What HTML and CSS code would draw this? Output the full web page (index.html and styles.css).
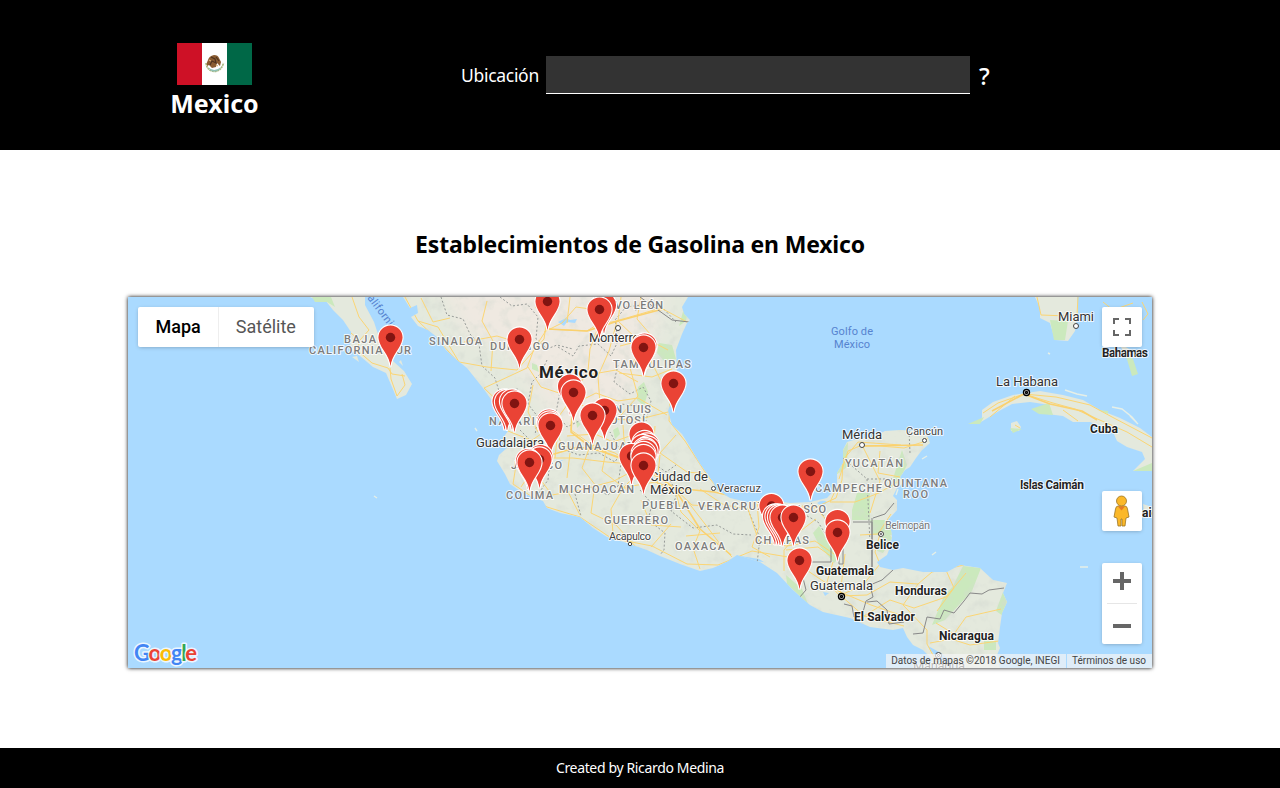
FILE: index.html
```html
<!DOCTYPE html>
<html lang="es">
<head>
<meta charset="utf-8">
<title>Establecimientos de Gasolina en Mexico</title>
<link rel="stylesheet" href="styles.css">
</head>
<body>
<header class="header">
  <div class="brand">
    <svg class="flag" viewBox="0 0 75 42">
      <path fill="#ce1126" d="M0 0h25v42H0z"/><path fill="#fff" d="M25 0h25v42H25z"/><path fill="#006847" d="M50 0h25v42H50z"/>
      <path d="M29 20q1 8 8.500 8.500q7-.5 9-8.500" fill="none" stroke="#a9b77f" stroke-width="1.600" stroke-dasharray="2 .6"/>
      <path d="M31 24q6 6 13 0l-2 3q-5 3-9 0z" fill="#8fc1b5"/>
      <path d="M31 17q1-4 6-5q4 0 5 3l2 4-1 4-3-3-1 4-4 1-3-3-2 1q-1-3 1-6z" fill="#8a5c31"/>
      <path d="M34 14l4 2 1 4-4-2-2 4m6-8l3 4" fill="none" stroke="#4f3420" stroke-width="1.200"/>
      <path d="M32 17l2 1m5 4l2 1" stroke="#d5b47b" stroke-width="1.200"/>
    </svg>
    <h1 class="brand-name">Mexico</h1>
  </div>
  <form class="search">
    <label class="search-label" for="place">Ubicación</label>
    <input class="search-input" id="place" type="text">
    <span class="search-help">?</span>
  </form>
</header>
<main class="main">
  <h2 class="title">Establecimientos de Gasolina en Mexico</h2>
  <section class="map">
    <svg class="map-canvas" viewBox="128 297 1024 371">
      <defs>
        <g id="pin"><path d="M-.7 28.500C-1.500 16-12.600 11-12.600 0A12.600 12.600 0 0 1 12.600 0C12.600 11 1.500 16 .7 28.500z" fill="#ea4335" stroke="#fff" stroke-width="1.100"/></g>
        <g id="pinDot"><use href="#pin"/><circle r="4.700" fill="#811411"/></g>
        <clipPath id="landClip"><use href="#mainland"/></clipPath>
        <filter id="soft" x="-30%" y="-30%" width="160%" height="160%"><feGaussianBlur stdDeviation="9"/></filter>
        <filter id="relief" x="0" y="0" width="100%" height="100%"><feTurbulence type="fractalNoise" baseFrequency=".09" numOctaves="4" seed="8"/><feColorMatrix values="0 0 0 0 .66  0 0 0 0 .7  0 0 0 0 .64  1.400 0 0 0 -.68"/></filter>
        <path id="mainland" d="M403 297L410 308 417 305 418 313 411 317 418 326 428 330 438 338 446 350 457 360 467 368 475 378 483 388 493 402 502 420 508 431 503 438 508 447 499 455 497 461 505 474 510 484 520 491 532 497 543 501 547 508 560 513 580 517 593 528 607 537 627 543 647 550 660 556 680 564 700 571 713 568 720 565 728 561 737 555 750 559 760 562 777 573 793 590 810 605 823 612 850 618 870 627 893 630 903 628 907 637 913 645 923 650 930 657 937 668H1000L997 655 1000 648 998 643 1000 627 1002 613 1007 602 1003 593 1007 583 993 580 980 568 960 565 947 572 923 572 903 568 893 570 880 567 877 562 887 555 890 547 892 537 890 523 888 520 897 510 897 500 893 496 897 488 903 483 900 477 905 470 910 467 916 458 922 450 930 443 927 435 918 431 900 430 885 431 873 437 857 439 847 442 843 450 843 463 837 473 837 487 827 498 810 502 790 503 767 500 747 502 730 498 717 490 713 482 700 464 690 447 682 434 672 425 668 411 673 395 674 382 677 370 676 350 682 334 687 323 690 320 684 314 682 307 688 297z"/>
      </defs>
      <path class="sea" d="M128 297h1024v371H128z"/>
      <use href="#mainland" class="land"/>
      <g clip-path="url(#landClip)">
        <path filter="url(#soft)" fill="#efe9e1" d="M440 285H665L655 330 635 390 615 415 590 440 565 430 530 385 505 345 465 335z"/>
        <g class="park">
          <path d="M659 343l13 2 4 14-12 2-7-8zM638 387l6-5 4 10-4 14-7-6zM532 363l5 2 2 7-7-3zM684 308l5-1-3 14-7 5zM843 450l5-8-1 25-11 8zM857 493h13v27h-18v-10zM870 520h28v15h-25zM819 526l12 20 7 13-4 4-15-18-6-12zM902 450l5 15-9 18-8 5zM887 530l5 8-9 15-6-2 4-12zM786 575l16 14 6 15-21-20zM963 566l18 2-9 23-27 29-13 5 12-29 9-10zM1003 592l4 10-4 14-7-5zM984 640l12 1v9h-12z"/>
          <path d="M613 430l5-3 2 7-5 5zM576 420l5 4-4 4z"/>
        </g>
        <path filter="url(#relief)" d="M400 297h610v371H400z"/>
        <g class="water"><path d="M558 322l8-4 4 2 7-1-2 4-8-1-3 4zM556 461l7-1-4 4zM817 503q6-4 10-1l-4 5zM823 592l6 1-4 3zM928 646l13 7 18 15h-10l-12-9zM626 447l4 3-4 1zM741 556l18 3 5 3-20-2z"/></g>
        <g class="state">
          <path d="M441 297l6 18 16 4 7 15 9 10 3 22 13 12 4 13 20-2M500 297l12 9 15-2 11 13-2 22 11 10 10-4 16 4M547 360l-6 13-9 9-4 22 10 13-3 18M558 347l15 9 6-10 19-2 13 12 7-15-3-21 11-13 16-2M635 310l24-6 17 18M618 365l-4 17 16 12 13-7 8 14-5 20M561 386l-5 27 11 14 16-8 12 7 17-4 9-18 17 2M520 430l12 12 2 15-14 12-9-3M560 448l19 7 20-2 16 9 6-10-11-20M550 458l-2 22-12 17M575 494l6 22M590 487l18 8 10-9 3-23 19 0M659 447l-10 13 17 12 10-7M640 490l12 14-4 16 17 13-1 17-4 5M668 477l9 16-6 18 22 17 24-3 16 9 18 1M748 510l12 28-3 26M800 512l18 10 10 16M811 503l12 12 9 15M843 458l24 21 3 64M867 479l25 0M909 431l1 22"/>
        </g>
        <g class="roads">
          <path d="M405 297l13 24 22 21 18 20 24 29 21 20 5 20 20 8 16 5M418 321l20 6 21 35 28 5 30 3 27-31 3-20-12-12M547 329l40 2 11-7 20-3 3-24M547 329l-13 20-7 19-43 20 23 22M544 332l18-9 14-16 28 4M598 328l18-7 45-13 26 14M599 325l-9 24-2 22-15 24-2 35 21 15 23 8 21 14M617 320l26 25 27 54-1 22 16 20 22 34 12 15 30 10 35 6 30 2 22-10 6-18 1-20 15-18 43 3M617 321l-8 30-11 25 3 43-9 29M643 345l-13 23 8 28-25 28M528 367l13 20 30 10 30 22 35 1 36-9M573 397l-22 30-26 18 20 13 28 0 34 4 37 3M531 445l-14 14-4 25 34 23 33 10 31 21 41 8 35 18 31 1 34-14 36 6 23 16 27 18 33 14 35 12M545 454l-5 25 12 16 28-5 34-9 28-15M553 421l9 25 38 5 42 16 18-14 27 19 20 2"/>
          <path d="M644 467l-21 21-12 21 2 24 17 11M646 470l28 18 18 17 27 2M675 489l6 23 19 19-7 17 7 21M688 502l17 22 15 20 12 13M700 489l24 16 24 4 11 33 28 4 28-5 22 15M757 502l2 25-7 20 18 10M803 505l-2 25-17 20 0 21M812 504l28 31M837 487l-7 15 25 0 24-9 21-13M862 446l18 0 24 2 19-6 6-5M862 445l-14 6-9 28M862 445l18 36-10 32M880 451l-2 22 22 4M880 534l-5 18 5 12-17 21-22 10M891 514l-13 20-18 1M845 554l-5 41 24 21 40 10M833 562l-6 20 13 14 27-1 23-13 28 2 14-12 32-7M864 616l26-16 24 8 32-11 20-24M918 584l-15 21 24 25 0 14 13 24M936 623l18 11 12-17 35-8M930 643l21-4 19 6 29-4M945 568l9 20-17 23"/>
          <path d="M421 298l12 24 17-4M487 301l-5 20 11 20-2 30M464 342l33-6 26 8M570 297l-3 26M641 297l-4 22 20 23M620 346l27-7 21 11M619 373l33 4 20-8M533 385l-5 27 10 20M587 375l29-5 22 12M574 404l22-11 22 8 20-3 29 17M529 448l4 21-12 18M558 430l-3 28M567 436l28-2 18 8 25-9M570 453l-3 25M590 446l-8 22 14 18M606 451l-4 20 25 19M623 425l2 29M633 430l10 32 17-9 16-18M655 426l-2 28M660 455l-3 28 20 12M621 488l34-6 30 10M566 488l14 27M594 491l-3 22 25 12 20 22M641 500l10 25 30 2M671 524l-20 23M720 533l-34 3M775 527l18 10 23-18M786 550l32-3 14 10"/>
        </g>
        <g class="main-roads"><path d="M547 329l40 2 31-10 45-12M573 397l-2 35 21 16 50 17M644 465l30 23 40 4 36 8M544 457l34-10 28 4M675 489l25 40 31 26M862 446l61-1"/></g>
        <path class="border" d="M640 297l18 13 14 10 17 2M799 598l7-8-3-12 4-16h24v-15l12-5v22h-4v-14M853 522h19v45M873 518l12-4 9-11M893 570l-11 10-12 5 3 12-7 4-3 11-9 5-2-11-8-2M872 567v-49M867 602l10-1 10 9 2 14 15-2M913 634l10-1 4-16 13 2 4-9 10 3 10-12 6-8 12 1 7-4 15-2"/>
      </g>
      <g class="land">
        <path d="M310 297l10 4 5-1 8 10 10 10 8 12-1 17 10 7 13 11 13 6 6 14 5 12 9-4 6-11-8-13-10-9-8-9-7-16-5-15-9-17V297zM352 357l7 5-2-6zM399 362l4 4-2-6z"/>
        <path d="M1035 297l5 11v10l10 5 5 17 13 1 7-10 3-20-1-14zM982 417l0-7 11-8 20-7 27-4 23 4 20 5 17 10 20 8 20 10 12 9v33l-19 1 12-12-3-7-15-5-10-6-4-9-23-10-17 0-10-6-16-2-14-5 17-4-20-3-18 2-13 7-18 11zM1011 423l6-2 4 6-2 4h-8zM1143 504l9 3v7l-8-1zM1119 343l10 6 4 12-8-6z"/>
      </g>
      <g class="park"><path d="M312 297h19l4 10-8-5-12 0zM1050 320l18 1-3 19-11 0zM1031 409l18-6 4 12-14-1zM968 424l16-7-4 7zM1010 428l12 1-9 4zM1133 471l19-8v8zM1126 356l7 3 5 15-6 2zM1098 410l10 1 0 3z"/></g>
      <g class="roads"><path d="M352 297l7 20 10 13-9 10-3 10 15 13 16 5 4 6 13 2M390 368l1 11 6 17 8-11-3-11M359 340l-8-7M1037 297l4 18 26 1M1078 297l-1 18M983 413l15-10 26-9 29 9 22 6 27 12 25 11 25 15M1024 394l32 3 34 8 22 12 40 21M1015 396l-25 21M1063 410l15 11M1103 302l10 8 20-7M1015 425l5 3M1142 302l6 12-5 6"/></g>
      <g class="main-roads"><path d="M992 411l32-17 26 10 32 7 15 9"/></g>
      <g class="islets"><path d="M374 496l3 2M475 428l2 3M922 459l5-3M898 489l-2 6M1065 390l12 4 10 2M1112 407l10 2 10 8 5 6M1130 416l8 8M932 555l4-3M1080 567l8 0M1048 353l2 1"/></g>
      <text class="sea-name" transform="translate(367 298) rotate(53)" textLength="42">alifornia</text>
      <g class="state-name">
        <text x="344" y="343" textLength="32">BAJA</text><text x="309" y="354" textLength="102">CALIFORNIA SUR</text><text x="429" y="345" textLength="53">SINALOA</text><text x="490" y="350" textLength="59">DURANGO</text><text x="592" y="309" textLength="71">NUEVO LEÓN</text><text x="613" y="368" textLength="78">TAMAULIPAS</text><text x="489" y="425" textLength="54">NAYARIT</text><text x="599" y="413" textLength="52">SAN LUIS</text><text x="602" y="424" textLength="43">POTOSÍ</text><text x="558" y="450" textLength="85">GUANAJUATO</text><text x="511" y="469" textLength="51">JALISCO</text><text x="506" y="499" textLength="47">COLIMA</text><text x="559" y="493" textLength="75">MICHOACÁN</text><text x="642" y="509" textLength="47">PUEBLA</text><text x="698" y="510" textLength="66">VERACRUZ</text><text x="604" y="524" textLength="64">GUERRERO</text><text x="675" y="550" textLength="50">OAXACA</text><text x="773" y="513" textLength="53">TABASCO</text><text x="755" y="544" textLength="54">CHIAPAS</text><text x="815" y="492" textLength="67">CAMPECHE</text><text x="845" y="467" textLength="58">YUCATÁN</text><text x="884" y="487" textLength="63">QUINTANA</text><text x="903" y="498" textLength="25">ROO</text>
      </g>
      <g class="city-name">
        <text x="589" y="342" textLength="56">Monterrey</text><text x="476" y="447" textLength="68">Guadalajara</text><text x="650" y="481" textLength="58">Ciudad de</text><text x="650" y="494" textLength="42">México</text><text x="842" y="439" textLength="40">Mérida</text><text x="1058" y="321" textLength="36">Miami</text><text x="996" y="386" textLength="62">La Habana</text><text x="810" y="590" textLength="63">Guatemala</text><text x="913" y="670" textLength="52">Managua</text>
      </g>
      <g class="town-name"><text x="717" y="492" textLength="44">Veracruz</text><text x="609" y="540" textLength="42">Acapulco</text><text x="906" y="435" textLength="37">Cancún</text><text class="muted" x="885" y="529" textLength="45">Belmopán</text></g>
      <text class="mexico-name" x="539" y="378" textLength="59">México</text>
      <g class="country-name"><text x="1102" y="357" textLength="46">Bahamas</text><text x="1090" y="433" textLength="28">Cuba</text><text x="1020" y="489" textLength="64">Islas Caimán</text><text x="1119" y="517" textLength="45">Jamaica</text><text x="866" y="549" textLength="33">Belice</text><text x="816" y="575" textLength="58">Guatemala</text><text x="895" y="595" textLength="52">Honduras</text><text x="854" y="621" textLength="61">El Salvador</text><text x="939" y="640" textLength="55">Nicaragua</text></g>
      <g class="gulf-name"><text x="831" y="334.500" textLength="42">Golfo de</text><text x="834" y="347.500" textLength="36">México</text></g>
      <g class="city-dot"><circle cx="618" cy="328" r="2.500"/><circle cx="713.500" cy="488.500" r="2"/><circle cx="630" cy="544" r="1.700"/><circle cx="862" cy="445" r="2.500"/><circle cx="924.500" cy="440.500" r="2"/><circle cx="1076" cy="326" r="2.500"/><circle cx="881" cy="534" r="2.500"/><circle cx="881" cy="534" r=".6"/><circle cx="938.500" cy="655.500" r="3"/><circle cx="938.500" cy="655.500" r="1"/></g>
      <g class="capital-dot"><circle cx="1026.500" cy="392.500" r="3"/><circle cx="1026.500" cy="392.500" r="1"/><circle cx="841.500" cy="596.500" r="3"/><circle cx="841.500" cy="596.500" r="1"/></g>
      <g>
        <use href="#pinDot" x="547.500" y="301.500"/><use href="#pin" x="604" y="305"/><use href="#pinDot" x="599.500" y="309.500"/><use href="#pinDot" x="390.500" y="337.500"/><use href="#pinDot" x="519.500" y="339.500"/><use href="#pin" x="644.500" y="345.500"/><use href="#pinDot" x="643.500" y="347.500"/><use href="#pinDot" x="673.500" y="383.500"/>
        <use href="#pin" x="570" y="386.500"/><use href="#pinDot" x="573.500" y="392.500"/><use href="#pin" x="504.500" y="401.500"/><use href="#pin" x="507" y="402"/><use href="#pin" x="512" y="401.500"/><use href="#pinDot" x="514.500" y="403.500"/><use href="#pinDot" x="604.500" y="410.500"/><use href="#pinDot" x="592.500" y="415.500"/>
        <use href="#pin" x="549" y="421.500"/><use href="#pin" x="549.500" y="423.500"/><use href="#pinDot" x="550.500" y="425.500"/><use href="#pinDot" x="641.500" y="434.500"/><use href="#pin" x="644.500" y="443"/><use href="#pin" x="647" y="445.500"/><use href="#pin" x="643" y="447"/><use href="#pin" x="647.500" y="448.500"/><use href="#pin" x="645" y="450"/><use href="#pinDot" x="631.500" y="456"/><use href="#pin" x="645.500" y="451.500"/><use href="#pin" x="643.500" y="454"/><use href="#pin" x="643.500" y="457"/><use href="#pin" x="540.500" y="457"/><use href="#pinDot" x="539.500" y="459.500"/><use href="#pin" x="528" y="461"/><use href="#pinDot" x="529.500" y="462.500"/><use href="#pinDot" x="643.500" y="465.500"/>
        <use href="#pinDot" x="810.500" y="471.500"/><use href="#pinDot" x="771.500" y="506"/><use href="#pin" x="775" y="516.500"/><use href="#pin" x="777.500" y="516.500"/><use href="#pin" x="780" y="517"/><use href="#pinDot" x="782.500" y="517.500"/><use href="#pinDot" x="793.500" y="517.500"/><use href="#pin" x="837.500" y="522"/><use href="#pinDot" x="837.500" y="532.500"/><use href="#pinDot" x="799.500" y="560.500"/>
      </g>
      <text class="google" x="134" y="661" textLength="63"><tspan class="g-blue">G</tspan><tspan class="g-red">o</tspan><tspan class="g-yellow">o</tspan><tspan class="g-blue">g</tspan><tspan class="g-green">l</tspan><tspan class="g-red">e</tspan></text>
    </svg>
    <div class="map-types"><span class="map-type active">Mapa</span><span class="map-type">Satélite</span></div>
    <div class="map-tools">
      <div class="tool"><svg width="18" height="18" viewBox="0 0 18 18" fill="none" stroke="#666" stroke-width="2"><path d="M1 6V1h5M12 1h5v5M17 12v5h-5M6 17H1v-5"/></svg></div>
      <div class="tool pegman"><svg width="20" height="32" viewBox="0 0 20 32"><g fill="#fbb829" stroke="#9b7527" stroke-width=".8"><path d="M6 11h7q2 0 2.500 3l1.500 8-3 1-1 8h-3V24h-1v7H6L5 23l-3-1 1.500-8Q4 11 6 11z"/><circle cx="9.500" cy="6" r="5"/></g><path d="M6 11.500h7L9.500 15.500z" fill="#e77a25"/></svg></div>
      <div class="zoom"><svg width="40" height="81" viewBox="0 0 40 81"><path d="M11 18h18M20 9v18M11 63h18" stroke="#666" stroke-width="4"/><path d="M5 40.500h30" stroke="#e6e6e6"/></svg></div>
    </div>
    <div class="credits"><span class="credit">Datos de mapas ©2018 Google, INEGI</span><span class="credit">Términos de uso</span></div>
  </section>
</main>
<footer class="footer">Created by Ricardo Medina</footer>
</body>
</html>
```
FILE: styles.css
```css
* { box-sizing: border-box; }
body { margin: 0; height: 788px; display: flex; flex-direction: column; background: #fff; font-family: "Segoe UI", "Noto Sans", "Open Sans", sans-serif; color: #000; }
.header { height: 150px; background: #000; color: #fff; display: flex; padding-left: 128px; }
.brand { width: 173px; padding-top: 43px; display: flex; flex-direction: column; align-items: center; }
.flag { display: block; width: 75px; height: 42px; }
.brand-name { margin: 1px 0 0; font-size: 25px; line-height: 34px; font-weight: 700; }
.search { display: flex; height: 38px; margin: 56px 0 0 160px; align-items: center; }
.search-label { width: 85px; font-size: 17.5px; letter-spacing: -.3px; white-space: nowrap; }
.search-input { width: 424px; height: 38px; background: #333; color: #fff; border: 0; border-bottom: 1px solid #fff; padding: 0 8px; border-radius: 0; }
.search-help { margin-left: 9px; font-size: 24px; font-weight: 500; }
.main { flex: 1; display: flex; flex-direction: column; align-items: center; }
.title { margin: 77px 0 36px; height: 34px; line-height: 34px; font-size: 23px; font-weight: 700; letter-spacing: -.19px; white-space: nowrap; }
.map { position: relative; width: 1024px; height: 371px; box-shadow: 0 0 4px #000; font-family: Roboto, sans-serif; }
.map-canvas { display: block; width: 1024px; height: 371px; }
.sea, .water { fill: #aadaff; }
.land { fill: #e4e9dd; }
.park { fill: #cbe9bd; }
.roads { fill: none; stroke: #fbd574; stroke-width: 1; stroke-linejoin: round; }
.main-roads { fill: none; stroke: #fad16f; stroke-width: 1.6; stroke-linejoin: round; }
.state { fill: none; stroke: #979b98; stroke-width: 1; stroke-dasharray: 2 2; }
.border { fill: none; stroke: #888; stroke-width: 1; }
.islets { fill: none; stroke: #e6efe7; stroke-width: 1.4; }
.map-canvas text { paint-order: stroke; stroke: #fff; stroke-opacity: .8; stroke-width: 2px; stroke-linejoin: round; }
.state-name { font-size: 11px; font-weight: 500; fill: #7c7c7c; }
.city-name { font-size: 13px; fill: #333; }
.town-name { font-size: 11px; fill: #444; }
.town-name .muted { fill: #777; }
.country-name { font-size: 12px; font-weight: 700; fill: #222; }
.mexico-name { font-size: 17px; font-weight: 700; fill: #222; }
.map-canvas .gulf-name text, .map-canvas .sea-name { stroke: none; fill: #5683cf; font-size: 11px; }
.city-dot { fill: #fff; stroke: #444; stroke-width: 1; }
.capital-dot { fill: #fff; stroke: #000; stroke-width: 1.4; }
.map-canvas .google { font-family: Lato, sans-serif; font-size: 22px; stroke-width: 3px; }
.map-canvas .google tspan { font-weight: 700; }
.g-blue { fill: #4285f4; }
.g-red { fill: #ea4335; }
.g-yellow { fill: #fbbc05; }
.g-green { fill: #34a853; }
.map-types { position: absolute; left: 10px; top: 10px; height: 40px; display: flex; background: #fff; border-radius: 2px; box-shadow: 0 1px 4px -1px rgba(0,0,0,.3); font-size: 18px; }
.map-type { line-height: 40px; padding: 0 17px; color: #565656; }
.map-type + .map-type { border-left: 1px solid #eee; padding-right: 18px; }
.map-type.active { color: #000; font-weight: 500; padding-left: 17.5px; }
.map-tools { position: absolute; right: 10px; top: 10px; display: flex; flex-direction: column; }
.tool, .zoom { width: 40px; background: #fff; border-radius: 2px; box-shadow: 0 1px 4px -1px rgba(0,0,0,.3); }
.tool { height: 40px; display: flex; align-items: center; justify-content: center; }
.pegman { margin: 144px 0 32px; }
.zoom { height: 81px; }
.zoom svg { display: block; }
.credits { position: absolute; right: 0; bottom: 0; height: 14px; display: flex; gap: 1px; font-size: 10px; line-height: 14px; color: #444; white-space: nowrap; }
.credit { background: rgba(245,245,245,.7); padding: 0 6px 0 5px; }
.footer { height: 40px; background: #000; color: #fff; font-size: 14px; line-height: 40px; text-align: center; letter-spacing: -.35px; }
```
